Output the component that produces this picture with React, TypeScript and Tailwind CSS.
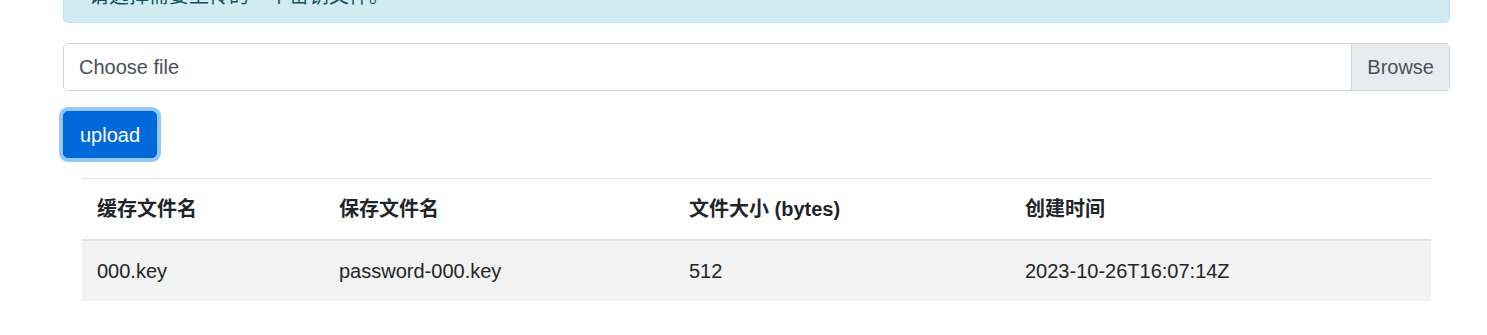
const rows = [
  { cache: "000.key", saved: "password-000.key", size: "512", created: "2023-10-26T16:07:14Z" },
];

const font = "font-['Segoe_UI','Liberation_Sans','Noto_Sans_CJK_SC',sans-serif]";

export default function App() {
  return (
    <div className={`${font} ml-[63px] w-[1387px] text-[20px] leading-[30px] text-[#212529]`}>
      {/* alert is scrolled mostly out of view in the screenshot */}
      <div className="-mt-[35px] mb-[20px] rounded-[5px] border border-[#bee5eb] bg-[#d1ecf1] px-[25px] pt-[15px] pb-[11px] text-[#0c5460]">
        请选择需要上传的一个密钥文件。
      </div>

      <div className="mb-[20px] flex h-[48px] overflow-hidden rounded-[5px] border border-[#ced4da] bg-white text-[#495057]">
        <div className="flex flex-1 items-center px-[15px]">Choose file</div>
        <div className="flex items-center border-l border-[#ced4da] bg-[#e9ecef] px-[15px]">Browse</div>
      </div>

      <button
        type="button"
        className="mb-[20px] h-[47px] w-[94px] rounded-[5px] border border-[#0062cc] bg-[#0069d9] text-white shadow-[0_0_0_4px_rgba(38,143,255,0.5)]"
      >
        upload
      </button>

      <div className="mx-[19px]">
        <table className="w-full border-collapse text-left">
          <thead>
            <tr className="border-t border-b-2 border-[#dee2e6]">
              <th className="w-[242px] p-[15px] font-bold">缓存文件名</th>
              <th className="w-[350px] p-[15px] font-bold">保存文件名</th>
              <th className="w-[336px] p-[15px] font-bold">文件大小 (bytes)</th>
              <th className="p-[15px] font-bold">创建时间</th>
            </tr>
          </thead>
          <tbody>
            {rows.map((r) => (
              <tr key={r.cache} className="bg-[#f2f2f2]">
                <td className="p-[15px]">{r.cache}</td>
                <td className="p-[15px]">{r.saved}</td>
                <td className="p-[15px]">{r.size}</td>
                <td className="p-[15px]">{r.created}</td>
              </tr>
            ))}
          </tbody>
        </table>
      </div>
    </div>
  );
}
